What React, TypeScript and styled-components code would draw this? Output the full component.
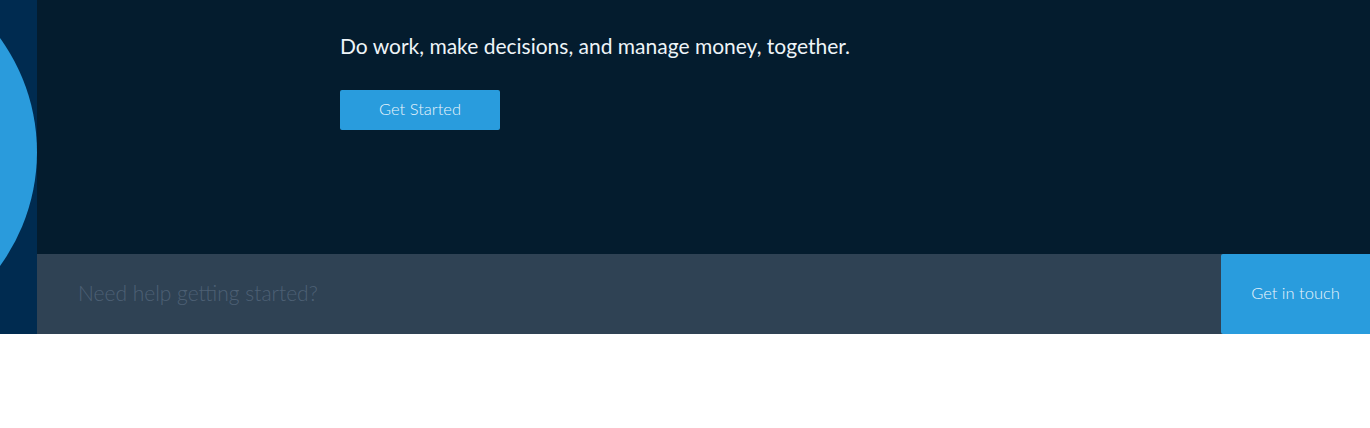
import React from 'react'
import styled, { createGlobalStyle } from 'styled-components'

const GlobalStyle = createGlobalStyle`
  html, body {
    margin: 0;
    padding: 0;
    background: #ffffff;
  }
  body {
    font-family: Lato, 'Noto Sans', sans-serif;
  }
`

const Page = styled.div`
  display: flex;
  height: 334px;
`

const Sidebar = styled.aside`
  width: 37px;
  flex-shrink: 0;
  background: #002b50;
  overflow: hidden;
  display: flex;
`

const Main = styled.div`
  flex: 1;
  display: flex;
  flex-direction: column;
`

const Hero = styled.section`
  height: 254px;
  box-sizing: border-box;
  background: #041c2e;
  padding: 33px 0 0 303px;
  display: flex;
  flex-direction: column;
  align-items: flex-start;
`

const Tagline = styled.p`
  margin: 0;
  color: #eef4f8;
  font-size: 21px;
  line-height: 26px;
  font-weight: 400;
`

const PrimaryButton = styled.button`
  margin-top: 31px;
  width: 160px;
  height: 40px;
  padding: 0 0 3px;
  border: none;
  border-radius: 2px;
  background: #299cdd;
  color: #eaf5fc;
  font-family: inherit;
  font-size: 16.5px;
  font-weight: 300;
  cursor: pointer;
`

const HelpBar = styled.div`
  height: 80px;
  display: flex;
  align-items: stretch;
  background: #2f4254;
`

const HelpText = styled.div`
  flex: 1;
  display: flex;
  align-items: center;
  padding: 0 0 3px 41px;
  color: #4d6074;
  font-size: 21px;
  font-weight: 300;
`

const ContactButton = styled.button`
  width: 149px;
  padding: 0 0 3px;
  border: none;
  border-radius: 2px 0 0 2px;
  background: #299cdd;
  color: #eaf5fc;
  font-family: inherit;
  font-size: 16.5px;
  font-weight: 300;
  cursor: pointer;
`

const Circle = () => (
  <svg width="37" height="334" viewBox="0 0 37 334">
    <circle cx="-157" cy="152" r="194" fill="#2a9bdc" />
  </svg>
)

export default function App() {
  return (
    <>
      <GlobalStyle />
      <Page>
        <Sidebar>
          <Circle />
        </Sidebar>
        <Main>
          <Hero>
            <Tagline>Do work, make decisions, and manage money, together.</Tagline>
            <PrimaryButton>Get Started</PrimaryButton>
          </Hero>
          <HelpBar>
            <HelpText>Need help getting started?</HelpText>
            <ContactButton>Get in touch</ContactButton>
          </HelpBar>
        </Main>
      </Page>
    </>
  )
}
